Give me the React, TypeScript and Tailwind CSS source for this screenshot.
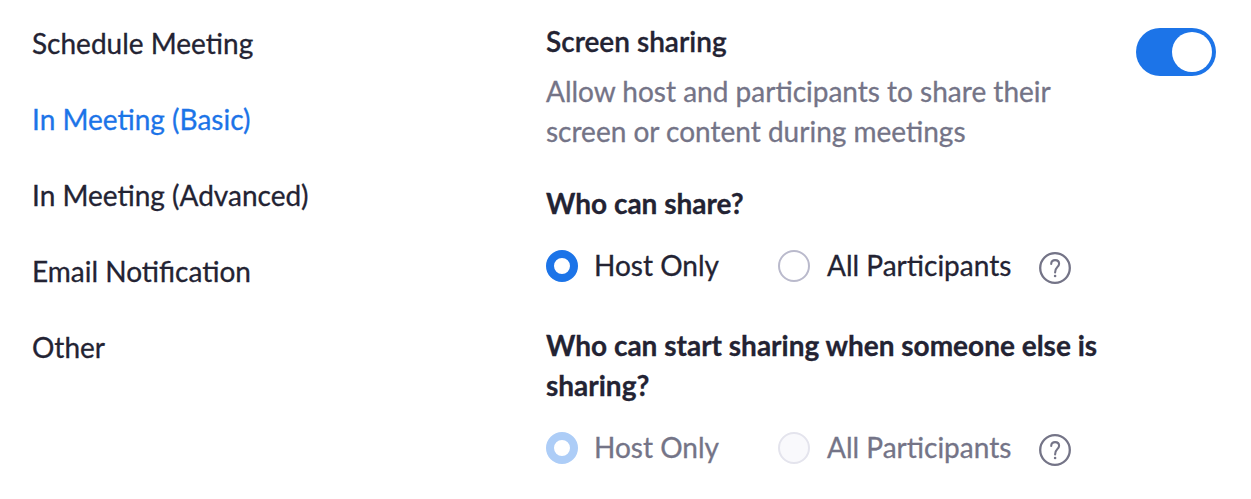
import React from "react";

const navItems = [
  { label: "Schedule Meeting", active: false },
  { label: "In Meeting (Basic)", active: true },
  { label: "In Meeting (Advanced)", active: false },
  { label: "Email Notification", active: false },
  { label: "Other", active: false },
];

function HelpIcon() {
  return (
    <svg className="mt-[5px] h-8 w-8 shrink-0" viewBox="0 0 32 32" fill="none" stroke="#747487">
      <circle cx="16" cy="16" r="14.8" strokeWidth="2.3" />
      <path d="M12.2 11.9C12.2 9.5 13.7 8.1 16.1 8.1s4 1.5 4 3.7c0 1.5-.7 2.4-1.9 3.5-1.4 1.3-2.1 2.3-2.1 5.2" strokeWidth="2.1" strokeLinecap="round" />
      <circle cx="16.1" cy="24" r="1.3" fill="#747487" stroke="none" />
    </svg>
  );
}

function RadioRow({ disabled = false }: { disabled?: boolean }) {
  return (
    <div className={disabled ? "flex h-10 items-center text-[#747487]" : "flex h-10 items-center"}>
      <span className={disabled ? "mt-0.5 h-8 w-8 shrink-0 rounded-full border-[8px] border-[#adcdf7]" : "mt-0.5 h-8 w-8 shrink-0 rounded-full border-[8px] border-[#1c74e8]"} />
      <span className="ml-4 w-[184px]">Host Only</span>
      <span className={disabled ? "mt-0.5 h-8 w-8 shrink-0 rounded-full border-2 border-[#e4e4ed] bg-[#f9f9fc]" : "mt-0.5 h-8 w-8 shrink-0 rounded-full border-2 border-[#babacc]"} />
      <span className="ml-[17px] w-[212px] whitespace-nowrap">All Participants</span>
      <HelpIcon />
    </div>
  );
}

export default function App() {
  return (
    <div className="flex h-[499px] w-[1251px] overflow-hidden bg-white font-['Lato',sans-serif] text-[28px] leading-10 text-[#232333] [-webkit-text-stroke:0.3px]">
      <nav className="flex w-[546px] shrink-0 flex-col gap-9 pt-[23px] pl-8">
        {navItems.map((n) => (
          <a key={n.label} className={n.active ? "text-[#1c74e8]" : ""}>{n.label}</a>
        ))}
      </nav>
      <main className="w-[590px] shrink-0 pt-[21px]">
        <h2 className="font-semibold">Screen sharing</h2>
        <p className="mt-2.5 text-[#747487]">Allow host and participants to share their<br />screen or content during meetings</p>
        <h3 className="mt-8 font-bold">Who can share?</h3>
        <div className="mt-[22px]"><RadioRow /></div>
        <h3 className="mt-10 font-bold">Who can start sharing when someone else is<br />sharing?</h3>
        <div className="mt-[22px]"><RadioRow disabled /></div>
      </main>
      <button aria-label="Toggle" className="mt-7 flex h-12 w-20 justify-end rounded-full bg-[#1c74e8] p-1">
        <span className="h-10 w-10 rounded-full bg-white" />
      </button>
    </div>
  );
}
